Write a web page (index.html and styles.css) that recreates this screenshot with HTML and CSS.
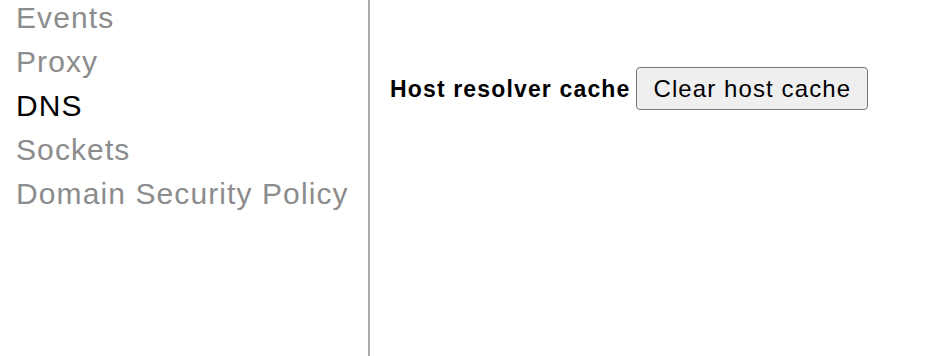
FILE: index.html
```html
<!DOCTYPE html>
<html>
<head>
<meta charset="utf-8">
<link rel="stylesheet" href="styles.css">
</head>
<body>
<div class="page">
  <nav class="tabs">
    <ul class="tab-list">
      <li class="tab">Events</li>
      <li class="tab">Proxy</li>
      <li class="tab active">DNS</li>
      <li class="tab">Sockets</li>
      <li class="tab">Domain Security Policy</li>
    </ul>
  </nav>
  <main class="content">
    <div class="row">
      <span class="label">Host resolver cache</span>
      <button class="btn">Clear host cache</button>
    </div>
  </main>
</div>
</body>
</html>
```

FILE: styles.css
```css
html, body {
  margin: 0;
  padding: 0;
  height: 100%;
  background: #ffffff;
  overflow: hidden;
}
body {
  font-family: "Liberation Sans", Arial, sans-serif;
}
.page {
  display: flex;
  height: 356px;
}
.tabs {
  width: 368px;
  flex: 0 0 368px;
  border-right: 2px solid #a9a9a9;
  overflow: hidden;
}
.tab-list {
  list-style: none;
  margin: -4px 0 0 0;
  padding: 0 0 0 16px;
}
.tab {
  font-size: 30px;
  line-height: 44px;
  letter-spacing: 1.1px;
  color: #8c8c8c;
  white-space: nowrap;
}
.tab.active {
  color: #000000;
}
.content {
  flex: 1;
  padding: 67px 0 0 20px;
}
.row {
  display: flex;
  align-items: baseline;
  gap: 6px;
}
.label {
  font-weight: bold;
  font-size: 23px;
  letter-spacing: 1.15px;
  color: #000;
}
.btn {
  font-family: "Liberation Sans", Arial, sans-serif;
  font-size: 24px;
  line-height: 28px;
  letter-spacing: 1.1px;
  color: #000;
  background: #efefef;
  border: 1px solid #767676;
  border-radius: 4px;
  padding: 7px 16px 6px 16px;
  margin: 0;
}
```
